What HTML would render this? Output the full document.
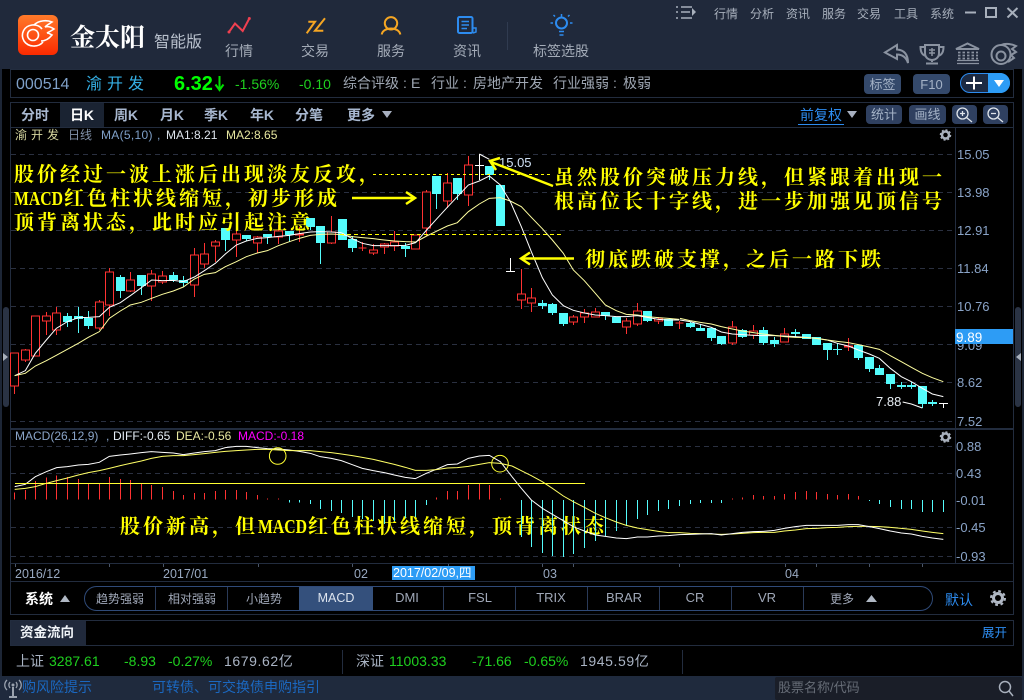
<!DOCTYPE html>
<html lang="zh"><head><meta charset="utf-8"><title>金太阳智能版</title>
<style>
html,body{margin:0;padding:0;background:#000;width:1024px;height:700px;overflow:hidden}
svg{display:block;font-family:"Liberation Sans","Noto Sans CJK SC",sans-serif}
.y{font-family:"Noto Serif CJK SC","Liberation Serif",serif;font-weight:700;font-size:20px;letter-spacing:3px;fill:#ffff00}
.m{font-family:"Liberation Serif",serif;font-weight:700;font-size:20px;fill:#ffff00}
.ax{font-size:13px;fill:#8aa4c8}
.nav{font-size:14px;fill:#a4acb8;text-anchor:middle}
.menu{font-size:12px;fill:#a8b0bc;text-anchor:middle}
.info{font-size:14px;fill:#a0a8b4}
.tab{font-size:14px;font-weight:700;fill:#a8b8d0;text-anchor:middle}
.btn{font-size:13px;fill:#a4b2c6;text-anchor:middle}
.ind{font-size:12px;fill:#a0a8b8;text-anchor:middle}
.lat{font-size:13px;fill:#a0a8b8;text-anchor:middle}
.g{font-size:14px;fill:#1fd01f}
.w{font-size:14px;fill:#aab4c4;letter-spacing:.6px}
</style></head><body>
<svg width="1024" height="700" viewBox="0 0 1024 700" xmlns="http://www.w3.org/2000/svg">
<rect width="1024" height="700" fill="#000"/>
<!-- frame -->
<rect width="1024" height="69" fill="#20293b"/>
<rect y="69" width="2" height="607" fill="#1d2636"/>
<rect x="1022" y="69" width="2" height="607" fill="#1d2636"/>
<rect y="676" width="1024" height="24" fill="#1f2a3d"/>
<g fill="none" stroke="#222c3e" stroke-width="1" shape-rendering="crispEdges">
<rect x="10.500" y="69.500" width="1003" height="28"/>
<rect x="10.500" y="102.500" width="1003" height="512"/>
<path d="M10 127.500H1014M10 563.500H1014M10 581.500H1014M955.500 128V563"/>
<rect x="10.500" y="620.500" width="1003" height="25"/>
</g>
<rect x="10" y="428" width="1004" height="2" fill="#222c3e"/>
<!-- scrollbars -->
<rect x="3" y="307" width="6" height="100" rx="3" fill="#2a3344"/>
<path d="M3 353l5 4-5 4z" fill="#a8b0bc"/>
<rect x="1015" y="307" width="6" height="100" rx="3" fill="#2a3344"/>
<path d="M1021 353l-5 4 5 4z" fill="#a8b0bc"/>

<!-- logo -->
<defs><linearGradient id="lg" x1="0" y1="0" x2="0" y2="1"><stop offset="0" stop-color="#ff7a2a"/><stop offset="1" stop-color="#fb2a00"/></linearGradient></defs>
<rect x="18" y="15" width="40" height="40" rx="6" fill="url(#lg)"/>
<g fill="none" stroke="#fff" stroke-width="1.600">
<circle cx="33" cy="35" r="5.500"/>
<path d="M43 42C38 48 28 47 24 41C20 34 24 26 32 25C36 24.500 40 26 42 29"/>
<path d="M34 25C39 20 47 20 52 22C49 24 47 25 45 27C48 26 51 27 54 29C51 31 49 32 47 33C49 33 50 34 52 35C48 40 44 41 41 41"/>
</g>
<text x="70" y="46" font-size="25" font-weight="700" fill="#fff" style="font-family:'Noto Serif CJK SC',serif">金太阳</text>
<text x="154" y="47" font-size="16" fill="#b8c0cc">智能版</text>

<!-- nav icons -->
<g fill="none" stroke-width="2">
<path d="M229 32L235 23.500L242.700 31L249.300 18.500" stroke="#f04050"/>
<circle cx="229" cy="32" r="1.500" fill="#f04050" stroke="none"/><circle cx="249.300" cy="18.500" r="1.500" fill="#f04050" stroke="none"/>
<path d="M308.300 21.700H315L306.700 33.300M325 18.300L315 30.700H323.300" stroke="#f5a623"/>
<circle cx="391" cy="23.300" r="6.200" stroke="#f5a623"/>
<path d="M381.700 34.500C383 26.500 399 26.500 400.300 34.500" stroke="#f5a623"/>
<rect x="458" y="17" width="14.500" height="16" rx="1.500" stroke="#2d8cf0"/>
<path d="M461.500 21.500H469M461.500 25H469M461.500 28.500H467" stroke="#2d8cf0" stroke-width="1.500"/>
<path d="M473 28H476V32L473 33" stroke="#2d8cf0" stroke-width="1.500"/>
<circle cx="561.500" cy="23" r="5.500" stroke="#2d8cf0"/>
<path d="M559 31.500H564M559.500 35H563.500M561.500 14V16.500M553 23H550.500M572.500 23H570M555 16.500L553.500 15M568 16.500L569.500 15" stroke="#2d8cf0" stroke-width="1.500"/>
</g>
<text x="239" y="56" class="nav">行情</text>
<text x="315" y="56" class="nav">交易</text>
<text x="391" y="56" class="nav">服务</text>
<text x="467" y="56" class="nav">资讯</text>
<text x="561" y="56" class="nav">标签选股</text>
<path d="M507.500 22V50" stroke="#303b50" shape-rendering="crispEdges"/>

<!-- top menu -->
<path d="M676 7h2M681 7h11M676 12h2M681 12h9M676 18h2M681 18h11" stroke="#a8b0bc" stroke-width="1.500"/><path d="M692 8l4 4-4 4z" fill="#a8b0bc"/>
<text x="726" y="18" class="menu">行情</text><text x="762" y="18" class="menu">分析</text><text x="798" y="18" class="menu">资讯</text><text x="834" y="18" class="menu">服务</text><text x="869" y="18" class="menu">交易</text><text x="906" y="18" class="menu">工具</text><text x="942" y="18" class="menu">系统</text>
<g fill="none" stroke="#a8b0bc" stroke-width="2"><path d="M965 12.500H976"/><rect x="986" y="8" width="10" height="9"/><path d="M1007.500 8L1017.500 17.500M1017.500 8L1007.500 17.500"/></g>

<!-- right header icons -->
<g fill="none" stroke="#8a92a0" stroke-width="2">
<path d="M897 45L885 52.500L897 59V54.500C902 54.500 906 57 908 63C908 54 904 50 897 49.500Z"/>
<path d="M925 45H939V53C939 58 935 60 932 60C929 60 925 58 925 53ZM925 47H920.500C920.500 52 922 55 926 56M939 47H943.500C943.500 52 942 55 938 56M932 60V62M926 63.500H938"/>
<path d="M929 50H935M932 48V56M929 53H935" stroke-width="1.500"/>
<path d="M956 49L967.500 43.500L979 49Z"/>
<path d="M957 63.500H979M957 60.500H979" stroke-width="1.200"/>
<path d="M958 52.500H978M958 55.500H978M958 58.500H978" stroke-dasharray="2.500 2" stroke-width="1.800"/>
<circle cx="1001" cy="54.500" r="9.500"/><circle cx="1001" cy="56" r="4.500"/>
<path d="M1001 45C1006 43 1012 44 1016 46L1012 49L1016 52L1011 55L1014 58L1008 62"/>
</g>

<!-- info bar -->
<text x="16" y="89" font-size="16" fill="#7fa0c8">000514</text>
<text x="86" y="89" font-size="16" fill="#35b0e6" letter-spacing="5">渝开发</text>
<text x="174" y="90" font-size="20" font-weight="700" fill="#00ff00">6.32</text>
<path d="M219.500 76V89M215.500 84.500L219.500 90L223.500 84.500" fill="none" stroke="#00e000" stroke-width="2"/>
<text x="235" y="89" class="g">-1.56%</text><text x="299" y="89" class="g">-0.10</text>
<text x="343" y="88" class="info">综合评级</text><text x="403" y="88" class="info">:</text><text x="411" y="88" class="info">E</text>
<text x="431" y="88" class="info">行业</text><text x="463" y="88" class="info">:</text><text x="473" y="88" class="info">房地产开发</text>
<text x="553" y="88" class="info">行业强弱</text><text x="613" y="88" class="info">:</text><text x="623" y="88" class="info">极弱</text>
<rect x="864" y="74" width="37" height="20" rx="4" fill="#34496b"/><text x="882.500" y="89" class="btn">标签</text>
<rect x="913" y="74" width="37" height="20" rx="4" fill="#34496b"/><text x="931.500" y="89" class="btn">F10</text>
<rect x="960.500" y="73.500" width="49" height="19" rx="9.500" fill="#1c2a42" stroke="#2d8cf0"/>
<path d="M988 73H1000A10 10 0 0 1 1000 93H988Z" fill="#2d9cf5"/>
<path d="M966 83H982M974 76.500V89.500" stroke="#fff" stroke-width="2"/>
<path d="M994 80H1004L999 87Z" fill="#fff"/>

<!-- tab row -->
<rect x="60" y="103" width="44" height="24" fill="#1a2332"/>
<text x="35" y="120" class="tab">分时</text><text x="82" y="120" class="tab" style="fill:#fff">日K</text>
<text x="126" y="120" class="tab">周K</text><text x="172" y="120" class="tab">月K</text><text x="216" y="120" class="tab">季K</text><text x="262" y="120" class="tab">年K</text><text x="309" y="120" class="tab">分笔</text><text x="361" y="120" class="tab">更多</text>
<path d="M382 111H392L387 118Z" fill="#a8b0c0"/>
<text x="800" y="120" font-size="14" fill="#2d8cf0">前复权</text><path d="M798 124.500H844" stroke="#2d8cf0"/>
<path d="M847 111H857L852 118Z" fill="#a8b0c0"/>
<rect x="866" y="105" width="36" height="19" rx="4" fill="#2f4060"/><text x="884" y="119" class="btn">统计</text>
<rect x="909" y="105" width="37" height="19" rx="4" fill="#2f4060"/><text x="927.500" y="119" class="btn">画线</text>
<rect x="952" y="105" width="25" height="19" rx="4" fill="#2f4060"/>
<rect x="983" y="105" width="25" height="19" rx="4" fill="#2f4060"/>
<g fill="none" stroke="#dfe4ea" stroke-width="1.300"><circle cx="962.500" cy="113.500" r="5.500"/><path d="M960 113.500H965M962.500 111V116M966.500 117.500L972 122" /><circle cx="993.500" cy="113.500" r="5.500"/><path d="M991 113.500H996M997.500 117.500L1003 122"/></g>

<!-- main chart labels -->
<text x="15" y="139" font-size="12" fill="#d8d8a0" letter-spacing="4">渝开发</text>
<text x="68" y="139" font-size="12" fill="#8090a8">日线</text>
<text x="101" y="139" font-size="12" fill="#7fa0c8" letter-spacing=".3">MA(5,10)</text><text x="157" y="139" font-size="12" fill="#7fa0c8">,</text>
<text x="166" y="139" font-size="12" fill="#dfe6ee">MA1:8.21</text>
<text x="226" y="139" font-size="12" fill="#e8e8a0">MA2:8.65</text>
<g fill="none" stroke="#a8b0bc"><circle cx="945.500" cy="135" r="3.500" stroke-width="2.500"/><circle cx="945.500" cy="135" r="5" stroke-width="1.500" stroke-dasharray="2 1.900"/>
<circle cx="945.500" cy="437" r="3.500" stroke-width="2.500"/><circle cx="945.500" cy="437" r="5" stroke-width="1.500" stroke-dasharray="2 1.900"/></g>

<!-- grid -->
<g stroke="#2a3040" stroke-dasharray="5 4" shape-rendering="crispEdges">
<path d="M11 154.500H955M11 192.500H955M11 230.500H955M11 268.500H955M11 306.500H955M11 344.500H955M11 382.500H955M11 421.500H955"/>
<path d="M11 446.500H955M11 473.500H955M11 527.500H955M11 556.500H955"/>
</g>

<!-- candles -->
<g shape-rendering="crispEdges">
<path fill="none" stroke="#ff3232" d="M14.500 353V394M25.500 349V362M35.500 316V356M46.500 312V335M56.500 307V335M99.500 300V330M109.500 268V316M130.500 272V292M151.500 270V301M162.500 271V284M194.500 248V297M204.500 243V268M215.500 240V262M236.500 230V257M257.500 236V253M278.500 225V244M299.500 227V242M331.500 216V244M362.500 242V251M373.500 244V255M384.500 243V254M394.500 231V251M415.500 235V249M426.500 190V236M447.500 173V208M468.500 156V206M521.500 269V309M531.500 288V312M573.500 315V325M584.500 309V323M595.500 308V317M626.500 318V334M637.500 303V326M658.500 317V324M679.500 321V329M732.500 321V345M753.500 325V339M784.500 328V342M848.500 338V351"/>
<path fill="#000" stroke="#ff3232" d="M10.500 353h8v33h-8zM21.500 350h8v10h-8zM31.500 316h8v40h-8zM42.500 316h8v5h-8zM52.500 313h8v17h-8zM95.500 302h8v26h-8zM105.500 272h8v33h-8zM126.500 280h8v11h-8zM147.500 274h8v12h-8zM158.500 276h8v6h-8zM190.500 255h8v30h-8zM200.500 254h8v10h-8zM211.500 242h8v4h-8zM232.500 234h8v6h-8zM253.500 237h8v6h-8zM274.500 231h8v6h-8zM295.500 234h8v1h-8zM327.500 232h8v11h-8zM358.500 248h8v0h-8zM369.500 250h8v3h-8zM380.500 244h8v3h-8zM390.500 242h8v4h-8zM411.500 235h8v14h-8zM422.500 192h8v36h-8zM443.500 183h8v18h-8zM464.500 165h8v30h-8zM517.500 294h8v6h-8zM527.500 298h8v5h-8zM569.500 317h8v5h-8zM580.500 313h8v4h-8zM591.500 312h8v5h-8zM622.500 321h8v6h-8zM633.500 311h8v13h-8zM654.500 319h8v2h-8zM675.500 323h8v0h-8zM728.500 327h8v16h-8zM749.500 331h8v4h-8zM780.500 334h8v8h-8zM844.500 346h8v1h-8z"/>
<path fill="none" stroke="#54fcfc" d="M67.500 313V327M78.500 307V333M88.500 311V329M120.500 275V298M141.500 275V295M173.500 272V282M183.500 276V287M225.500 228V251M246.500 235V241M267.500 234V244M289.500 231V242M310.500 218V230M320.500 226V264M342.500 219V240M352.500 236V252M405.500 243V257M436.500 176V209M457.500 178V200M489.500 166V180M500.500 185V226M542.500 300V309M552.500 303V315M563.500 313V326M605.500 312V320M616.500 317V323M647.500 311V322M668.500 319V326M690.500 322V328M700.500 324V331M711.500 328V341M721.500 336V345M742.500 329V338M763.500 327V345M774.500 337V347M795.500 329V337M806.500 334V339M816.500 337V345M827.500 343V360M837.500 343V355M858.500 345V360M869.500 357V372M879.500 365V375M890.500 374V389M901.500 382V389M911.500 382V389M922.500 386V408M932.500 400V406"/>
<path fill="#54fcfc" d="M63 316h9v6h-9zM74 316h9v3h-9zM84 318h9v8h-9zM116 277h9v14h-9zM137 275h9v11h-9zM169 275h9v5h-9zM179 280h9v3h-9zM221 228h9v12h-9zM242 235h9v4h-9zM263 234h9v3h-9zM285 231h9v4h-9zM306 218h9v9h-9zM316 226h9v17h-9zM338 219h9v21h-9zM348 239h9v9h-9zM401 246h9v3h-9zM432 176h9v18h-9zM453 178h9v16h-9zM485 166h9v9h-9zM496 185h9v41h-9zM538 303h9v3h-9zM548 304h9v9h-9zM559 313h9v11h-9zM601 312h9v4h-9zM612 317h9v6h-9zM643 311h9v10h-9zM664 319h9v7h-9zM686 323h9v4h-9zM696 328h9v3h-9zM707 328h9v10h-9zM717 336h9v8h-9zM738 330h9v7h-9zM759 330h9v13h-9zM770 340h9v4h-9zM791 332h9v2h-9zM802 334h9v5h-9zM812 337h9v8h-9zM823 343h9v7h-9zM833 349h9v1h-9zM854 345h9v13h-9zM865 357h9v12h-9zM875 368h9v7h-9zM886 374h9v10h-9zM897 385h9v2h-9zM907 385h9v2h-9zM918 386h9v18h-9zM928 402h9v2h-9z"/>
<path fill="none" stroke="#fff" d="M479.500 154V180M475 165.500H484M510.500 258V272M506 271.500H515M943.500 403V408M939 403.500H948"/>
</g>

<!-- MA lines (3x source coords) -->
<g fill="none" stroke-width="3">
<g transform="translate(0 130) scale(.33333)">
<polyline stroke="#ffffff" points="44,737 76,722 106,670 139,630 169,595 202,575 235,563 265,562 298,560 328,532 361,518 391,497 424,473 455,450 487,452 520,451 550,455 583,441 613,422 646,400 676,372 709,345 739,333 772,325 802,323 835,319 868,316 898,311 931,306 961,305 994,306 1024,308"/>
<polyline stroke="#ffffa0" points="44,737 76,730 106,708 139,692 169,676 202,658 235,640 265,622 298,605 328,565 361,543 391,525 424,517 455,505 487,493 520,483 550,471 583,447 613,433 646,428 676,410 709,395 739,380 772,369 802,362 835,347 868,335 898,325 931,316 961,313 994,312 1024,314"/>
</g>
<g transform="translate(340 130) scale(.33333)">
<polyline stroke="#ffffa0" points="4,314 37,320 67,323 100,326 133,330 163,333 196,335 227,336 260,318 289,304 322,288 352,278 385,245 418,222 448,205 481,203 511,213 544,230 574,262 607,296 637,330 670,370 700,420 733,452 766,490 796,525 829,542 859,553 892,555 922,560 955,563 985,565 1018,568"/>
<polyline stroke="#ffffff" points="4,308 37,326 67,340 100,347 133,347 163,347 196,346 227,338 260,300 289,268 322,232 352,200 385,165 418,153 448,138 481,165 511,215 544,290 574,365 607,443 637,495 670,527 700,541 733,549 766,555 796,557 829,560 859,560 892,557 922,562 955,568 985,570 1018,570"/>
<polyline stroke="#ffffff" points="418,72 448,88"/>
</g>
<g transform="translate(680 130) scale(.33333)">
<polyline stroke="#ffffff" points="0,570 30,575 61,583 94,592 124,606 157,612 187,614 220,616 250,617 283,617 313,618 346,620 379,622 409,625 442,630 472,640 505,648 535,660 568,672 598,685 631,715 664,740 694,755 727,775 757,792 790,800"/>
<polyline stroke="#ffffa0" points="0,565 30,572 61,577 94,582 124,590 157,597 187,603 220,608 250,612 283,616 313,620 346,622 379,623 409,625 442,630 472,634 505,638 535,644 568,651 598,658 631,677 664,695 694,712 727,730 757,743 790,755"/>
<polyline stroke="#ffffff" points="668,816 694,822 727,834"/>
</g>
</g>
<text x="499" y="167" font-size="13" fill="#cfe0f4">15.05</text>
<text x="876" y="406" font-size="13" fill="#e8eef4">7.88</text>

<!-- axis main -->
<text x="957" y="159" class="ax">15.05</text><text x="957" y="197" class="ax">13.98</text><text x="957" y="235" class="ax">12.91</text><text x="957" y="273" class="ax">11.84</text><text x="957" y="311" class="ax">10.76</text><text x="957" y="350" class="ax">9.09</text><text x="957" y="387" class="ax">8.62</text><text x="957" y="426" class="ax">7.52</text>
<rect x="955" y="329" width="58" height="15" fill="#2d9cf5"/><text x="956" y="342" font-size="13.500" fill="#fff">9.89</text>

<!-- annotations -->
<path d="M373 174.500H553" stroke="#ffff00" stroke-dasharray="3 3" shape-rendering="crispEdges"/>
<path d="M340 234.500H563" stroke="#ffff00" stroke-dasharray="4 3" shape-rendering="crispEdges"/>
<g fill="none" stroke="#ffff00">
<path d="M352 198H414M406 192L415 198L406 204" stroke-width="2.500"/>
<path d="M553 186L491 162M500 158L490 161L496 170" stroke-width="2.500"/>
<path d="M574 258.500H522M530 252.500L521 258.500L530 264.500" stroke-width="2.500"/>
</g>
<text x="14" y="181" class="y">股价经过一波上涨后出现淡友反攻&#65292;</text>
<text x="14" y="205" class="m" textLength="49" lengthAdjust="spacingAndGlyphs">MACD</text>
<text x="64" y="205" class="y">红色柱状线缩短&#65292;初步形成</text>
<text x="14" y="229" class="y">顶背离状态&#65292;此时应引起注意</text>
<text x="554" y="184" class="y">虽然股价突破压力线&#65292;但紧跟着出现一</text>
<text x="554" y="208" class="y">根高位长十字线&#65292;进一步加强见顶信号</text>
<text x="585" y="266" class="y">彻底跌破支撑&#65292;之后一路下跌</text>
<text x="120" y="533" class="y">股价新高&#65292;但</text>
<text x="258" y="533" class="m" textLength="49" lengthAdjust="spacingAndGlyphs">MACD</text>
<text x="308" y="533" class="y">红色柱状线缩短&#65292;顶背离状态</text>

<!-- MACD panel -->
<text x="15" y="440" font-size="12" fill="#8aa4c8">MACD(26,12,9)</text><text x="106" y="440" font-size="12" fill="#8aa4c8">,</text>
<text x="113" y="440" font-size="12" fill="#e6eef6">DIFF:-0.65</text>
<text x="176" y="440" font-size="12" fill="#e8e8a0">DEA:-0.56</text>
<text x="238" y="440" font-size="12" fill="#ff00ff">MACD:-0.18</text>
<text x="956" y="451" class="ax">0.88</text><text x="956" y="478" class="ax">0.43</text><text x="956" y="505" class="ax">-0.01</text><text x="956" y="532" class="ax">-0.45</text><text x="956" y="561" class="ax">-0.93</text>
<g fill="none" stroke-width="3">
<g transform="translate(0 420) scale(.33333)" shape-rendering="crispEdges">
<path stroke="#ff3232" d="M44 238V218M76 238V210M106 238V183M139 238V172M170 238V166M202 238V171M235 238V177M265 238V191M298 238V192M328 238V171M361 238V177M391 238V180M424 238V191M454 238V195M487 238V201M520 238V213M550 238V225M583 238V219M613 238V219M646 238V213M676 238V210M709 238V210M739 238V216M772 238V225M802 238V235M835 238V235M1309 238V232M1342 238V213M1372 238V213M1405 238V195M1438 238V191M1468 238V195M1501 238V235"/>
<path stroke="#54fcfc" d="M868 240V248M898 240V248M931 240V252M961 240V267M994 240V273M1024 240V279M1057 240V291M1087 240V297M1120 240V303M1153 240V312M1183 240V303M1216 240V294M1246 240V291M1279 240V255"/>
</g>
<g transform="translate(512 420) scale(.33333)" shape-rendering="crispEdges">
<path stroke="#54fcfc" d="M28 240V351M58 240V381M91 240V399M121 240V408M154 240V411M184 240V402M217 240V384M250 240V363M280 240V348M313 240V333M343 240V318M376 240V297M406 240V285M439 240V273M469 240V267M502 240V258M535 240V252M565 240V249M598 240V249M628 240V249M1072 240V243M1102 240V252M1135 240V261M1168 240V267M1198 240V267M1231 240V276M1261 240V276M1294 240V276"/>
<path stroke="#ff3232" d="M661 238V235M691 238V232M724 238V225M754 238V228M787 238V228M817 238V222M850 238V216M883 238V213M913 238V216M946 238V222M976 238V225M1009 238V222M1039 238V228"/>
</g>
<g transform="translate(0 420) scale(.33333)">
<polyline stroke="#ffffff" points="44,200 76,193 106,170 139,155 170,143 202,140 235,135 265,133 298,127 328,109 361,105 391,102 424,98 454,95 487,97 520,99 550,104 583,99 613,95 646,92 676,83 709,79 739,79 772,83 802,86 835,87 868,90 898,94 931,100 961,110 994,115 1024,122 1057,134 1087,145 1120,152 1153,158 1183,165 1216,172 1246,176 1279,160 1309,148 1342,134 1372,132 1405,115 1438,108 1468,106 1501,125 1536,170"/>
<polyline stroke="#ffff66" points="44,208 76,205 106,200 139,190 170,182 202,174 235,165 265,158 298,152 328,145 361,137 391,130 424,123 454,115 487,109 520,107 550,107 583,104 613,101 646,97 676,94 709,92 739,90 772,88 802,88 835,90 868,92 898,92 931,92 961,95 994,98 1024,102 1057,107 1087,112 1120,118 1153,126 1183,133 1216,142 1246,151 1279,151 1309,149 1342,144 1372,143 1405,139 1438,133 1468,128 1501,130 1536,138"/>
</g>
<g transform="translate(512 420) scale(.33333)">
<polyline stroke="#ffff66" points="0,138 28,152 58,167 91,185 121,205 154,228 184,245 217,262 250,280 280,293 313,306 343,316 376,324 406,329 439,334 469,338 502,338 535,340 565,341 598,342 628,343 661,342 691,340 724,338 754,337 787,337 817,333 850,330 883,326 913,325 946,323 976,322 1009,320 1039,319 1072,319 1102,320 1135,322 1168,325 1198,328 1231,333 1261,337 1294,341"/>
<polyline stroke="#ffffff" points="0,170 28,205 58,240 91,265 121,283 154,302 184,320 217,333 250,345 280,349 313,354 343,356 376,351 406,351 439,348 469,347 502,344 535,343 565,342 598,341 628,345 661,341 691,337 724,335 754,334 787,331 817,325 850,320 883,316 913,316 946,316 976,316 1009,314 1039,314 1072,320 1102,326 1135,333 1168,339 1198,342 1231,349 1261,354 1294,358"/>
</g>
</g>
<path d="M15 483.500H585" stroke="#ffff33" stroke-width="1" shape-rendering="crispEdges"/>
<circle cx="277.700" cy="456" r="8.300" fill="none" stroke="#ffff33"/>
<circle cx="500" cy="463.700" r="8.300" fill="none" stroke="#ffff33"/>

<!-- date axis -->
<path d="M15.500 564v3M109.500 564v3M163.500 564v3M258.500 564v3M352.500 564v3M448.500 564v3M542.500 564v3M573.500 564v3M679.500 564v3M785.500 564v3M816.500 564v3M869.500 564v3M922.500 564v3" stroke="#4a5668" shape-rendering="crispEdges"/>
<text x="15" y="578" font-size="12.500" fill="#98a8c0">2016/12</text>
<text x="163" y="578" font-size="12.500" fill="#98a8c0">2017/01</text>
<text x="354" y="578" font-size="12.500" fill="#98a8c0">02</text>
<rect x="392" y="566" width="83" height="14" fill="#2d9cf5"/>
<text x="393" y="577" font-size="12.500" fill="#fff">2017/02/09,四</text>
<text x="543" y="578" font-size="12.500" fill="#98a8c0">03</text>
<text x="785" y="578" font-size="12.500" fill="#98a8c0">04</text>

<!-- indicator tabs -->
<text x="25" y="604" font-size="14" font-weight="700" fill="#fff">系统</text>
<path d="M60 602H70L65 595Z" fill="#b0b8c4"/>
<path d="M299 586.500H373V610H299Z" fill="#34507c"/>
<rect x="84.500" y="586.500" width="848" height="24" rx="12" fill="none" stroke="#2f4a78"/>
<path d="M155.500 587V610M227.500 587V610M443.500 587V610M515.500 587V610M587.500 587V610M659.500 587V610M731.500 587V610M803.500 587V610" stroke="#2a3a58" shape-rendering="crispEdges"/>
<text x="120" y="603" class="ind">趋势强弱</text><text x="192" y="603" class="ind">相对强弱</text><text x="264" y="603" class="ind">小趋势</text>
<text x="336" y="602" font-size="12.500" fill="#dde4ee" text-anchor="middle">MACD</text>
<text x="407" y="602" class="lat">DMI</text><text x="480" y="602" class="lat">FSL</text><text x="551" y="602" class="lat">TRIX</text><text x="624" y="602" class="lat">BRAR</text><text x="695" y="602" class="lat">CR</text><text x="767" y="602" class="lat">VR</text><text x="842" y="603" class="ind">更多</text>
<path d="M866 602H877L871.500 595Z" fill="#b0b8c4"/>
<text x="945" y="605" font-size="14" fill="#2d8cf0">默认</text>
<g fill="none" stroke="#b0b8c4"><circle cx="998" cy="598" r="4.500" stroke-width="3"/><circle cx="998" cy="598" r="7" stroke-width="2" stroke-dasharray="2.800 2.700"/></g>

<!-- fund flow -->
<rect x="11" y="621" width="75" height="24" fill="#20293b"/>
<text x="20" y="637" font-size="13.500" font-weight="700" fill="#f0f4f8">资金流向</text>
<text x="982" y="637" font-size="12.500" fill="#2d8cf0">展开</text>

<!-- index -->
<text x="16" y="666" class="w" style="letter-spacing:0">上证</text><text x="49" y="666" class="g">3287.61</text><text x="124" y="666" class="g">-8.93</text><text x="168" y="666" class="g">-0.27%</text><text x="224" y="666" class="w">1679.62亿</text>
<path d="M342.500 650V674M682.500 650V674" stroke="#222c3e" shape-rendering="crispEdges"/>
<text x="356" y="666" class="w" style="letter-spacing:0">深证</text><text x="389" y="666" class="g">11003.33</text><text x="472" y="666" class="g">-71.66</text><text x="524" y="666" class="g">-0.65%</text><text x="580" y="666" class="w">1945.59亿</text>

<!-- status bar -->
<g fill="none" stroke="#9aa2ae" stroke-width="1.300"><path d="M7 680C4 683 4 687 7 690M10 682C8.500 684 8.500 686 10 688M19 680C22 683 22 687 19 690M16 682C17.500 684 17.500 686 16 688"/><path d="M13 687V697M9 697H17" stroke-width="2"/></g>
<circle cx="13" cy="685" r="1.500" fill="#9aa2ae"/>
<text x="22" y="692" font-size="14" fill="#1b68c0">购风险提示</text>
<text x="152" y="692" font-size="14" fill="#1b68c0">可转债、可交换债申购指引</text>
<rect x="775" y="677" width="247" height="23" rx="2" fill="#1a1e28"/>
<text x="778" y="692" font-size="13" fill="#666c76">股票名称/代码</text>
<g fill="none" stroke="#a8b0bc" stroke-width="1.500"><circle cx="1005" cy="687" r="5.500"/><path d="M1009 691L1013 696"/></g>
</svg>
</body></html>
